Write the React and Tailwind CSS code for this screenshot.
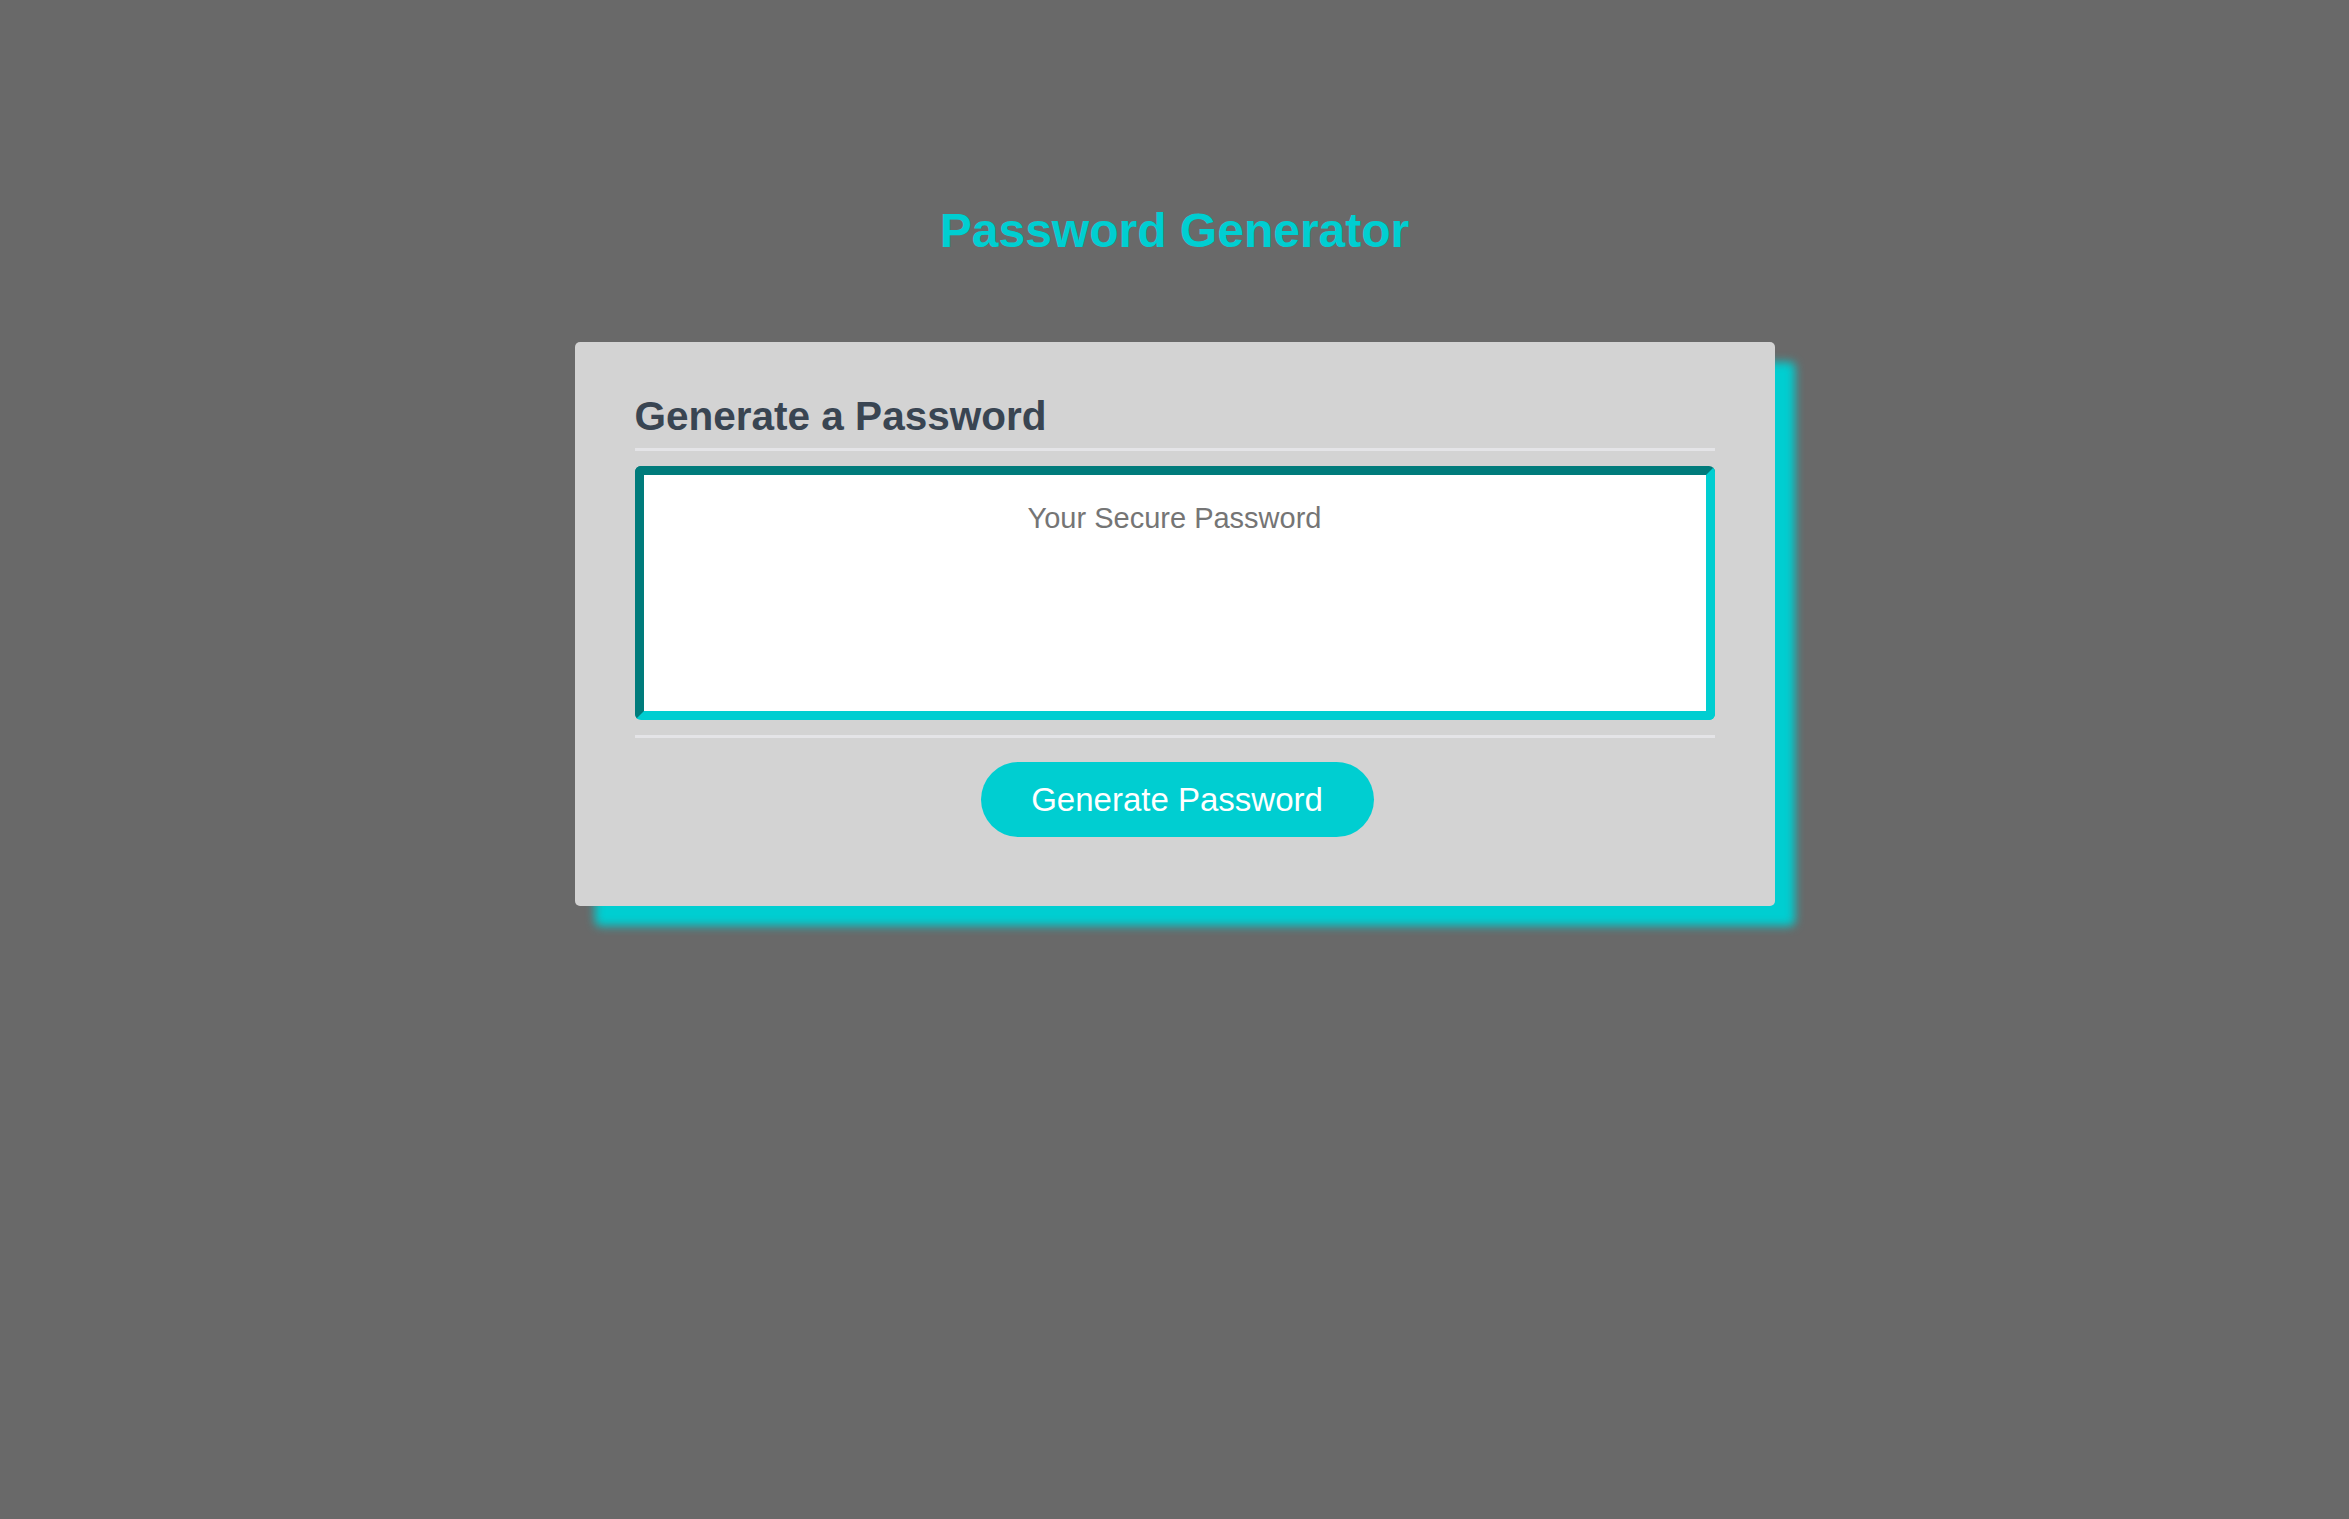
export default function App() {
  return (
    <div className="min-h-screen bg-[#696969] pt-[203px] font-['Liberation_Sans',Arial,sans-serif]">
      {/* Page title */}
      <h1 className="text-center text-[48px] leading-[55px] font-bold text-[#00ced1]">
        Password Generator
      </h1>

      {/* Card */}
      <div className="mx-auto mt-[84px] w-[1200px] rounded-[5px] bg-[#d3d3d3] px-[60px] pt-[51px] pb-[69px] shadow-[20px_20px_10px_#00ced1]">
        <h2 className="text-[40.5px] leading-[47px] font-bold text-[#394552]">Generate a Password</h2>
        <div className="mt-[8px] h-[3px] bg-[#e4e4e7]" />

        <textarea
          readOnly
          placeholder="Your Secure Password"
          className="mt-[15px] block h-[254px] w-full resize-none rounded-[6px] border-[9px] border-t-[#007b7b] border-l-[#007b7b] border-r-[#00ced1] border-b-[#00ced1] bg-white px-4 pt-[27px] text-center text-[29px] leading-[33px] text-[#757575] outline-none placeholder:text-[#757575]"
        />

        <div className="mt-[15px] h-[3px] bg-[#e4e4e7]" />

        <div className="mt-[24px] flex justify-center">
          <button className="ml-[5px] flex h-[75px] w-[393px] items-center justify-center rounded-full bg-[#00ced1] text-[33px] text-white">
            Generate Password
          </button>
        </div>
      </div>
    </div>
  );
}
